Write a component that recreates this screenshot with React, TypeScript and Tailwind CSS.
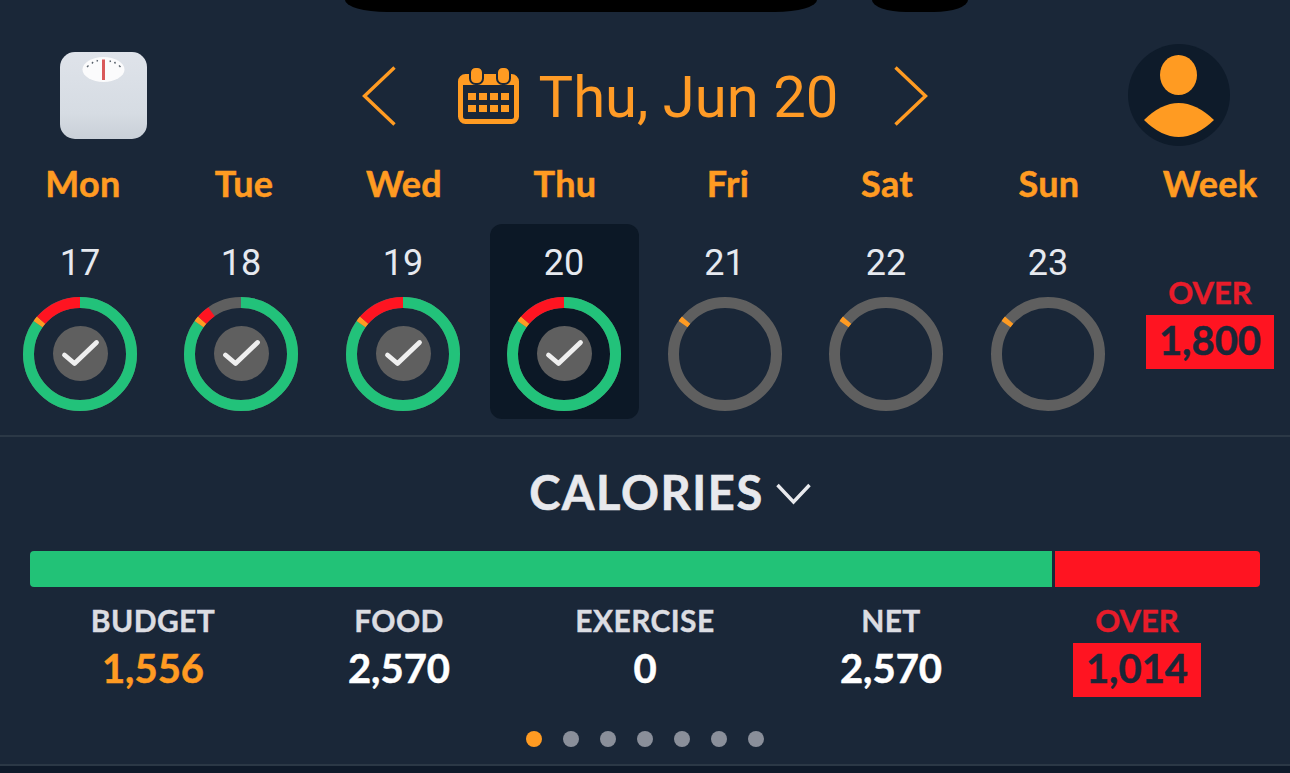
const ORANGE = '#ff9b22';
const GREEN = '#22c27a';
const RED = '#ff1421';
const GRAY = '#5f5f5f';

type Seg = [number, number, string];

function Ring({ segs, check }: { segs: Seg[]; check: boolean }) {
  return (
    <div className="relative w-[114px] h-[114px]">
      <svg width="114" height="114" viewBox="0 0 114 114" className="block -rotate-90">
        <circle cx="57" cy="57" r="51.5" fill="none" stroke={GRAY} strokeWidth="11" />
        {segs.map(([from, to, color], i) => (
          <circle
            key={i}
            cx="57"
            cy="57"
            r="51.5"
            fill="none"
            stroke={color}
            strokeWidth="11"
            pathLength={360}
            strokeDasharray={`${to - from} 360`}
            strokeDashoffset={-from}
          />
        ))}
      </svg>
      {check && (
        <div className="absolute left-[30px] top-[29px] w-[55px] h-[55px] rounded-full bg-[#5f5f5f] flex items-center justify-center">
          <svg width="55" height="55" viewBox="-27.5 -27.5 55 55">
            <path d="M-16 1.5L-6 10L16 -11" fill="none" stroke="#efefef" strokeWidth="4.8" strokeLinecap="round" strokeLinejoin="round" />
          </svg>
        </div>
      )}
    </div>
  );
}

const full: Seg[] = [[0, 305.5, GREEN], [305.5, 311, ORANGE], [311, 360, RED]];
const part: Seg[] = [[0, 305.5, GREEN], [305.5, 311, ORANGE], [311, 325, RED]];
const empty: Seg[] = [[305.5, 311, ORANGE]];

const days: { d: string; label: string; segs: Seg[]; check: boolean; sel?: boolean }[] = [
  { d: 'Mon', label: '17', segs: full, check: true },
  { d: 'Tue', label: '18', segs: part, check: true },
  { d: 'Wed', label: '19', segs: full, check: true },
  { d: 'Thu', label: '20', segs: full, check: true, sel: true },
  { d: 'Fri', label: '21', segs: empty, check: false },
  { d: 'Sat', label: '22', segs: empty, check: false },
  { d: 'Sun', label: '23', segs: empty, check: false },
];

function ScaleIcon() {
  return (
    <svg width="87" height="87" viewBox="0 0 87 87" className="block">
      <defs>
        <linearGradient id="scaleBg" x1="0" y1="0" x2="0" y2="1">
          <stop offset="0" stopColor="#dfe3ea" />
          <stop offset="0.7" stopColor="#d6dce3" />
          <stop offset="1" stopColor="#c9d0d8" />
        </linearGradient>
      </defs>
      <rect x="0" y="0" width="87" height="87" rx="15" fill="url(#scaleBg)" />
      <ellipse cx="43.5" cy="17.5" rx="21" ry="12.5" fill="#fbfbfc" />
      <path d="M27 15L28.5 13.5M32 11.5L33 10M37 9.5L37.5 8M50 8.5L50.5 10M54.5 10L55.5 11.5M59 13.5L60.5 15" stroke="#59626c" strokeWidth="1.4" fill="none" />
      <rect x="42" y="7.5" width="3" height="20.5" fill="#d9595a" />
    </svg>
  );
}

function CalendarIcon() {
  return (
    <svg width="61" height="56" viewBox="0 0 61 56" className="block">
      <rect x="2.5" y="8.5" width="56" height="45" rx="5" fill="none" stroke={ORANGE} strokeWidth="5" />
      <path d="M1 13a6 6 0 0 1 6-6h47a6 6 0 0 1 6 6v4H1z" fill={ORANGE} />
      <rect x="12" y="-1" width="13" height="17" rx="5.5" fill={ORANGE} stroke="#1a2738" strokeWidth="2" />
      <rect x="39" y="-1" width="13" height="17" rx="5.5" fill={ORANGE} stroke="#1a2738" strokeWidth="2" />
      {[10, 21, 32, 43].map((x) => (
        <g key={x}>
          <rect x={x} y="25" width="8" height="7" fill={ORANGE} />
          <rect x={x} y="37" width="8" height="7" fill={ORANGE} />
        </g>
      ))}
    </svg>
  );
}

function Avatar() {
  return (
    <div className="w-[102px] h-[102px] rounded-full bg-[#0e1b2a]">
      <svg width="102" height="102" viewBox="0 0 102 102" className="block">
        <ellipse cx="50.5" cy="31" rx="18.5" ry="20" fill={ORANGE} />
        <path d="M16 76Q50.5 42 86 76Q50.5 110 16 76Z" fill={ORANGE} />
      </svg>
    </div>
  );
}

function Chevron({ dir }: { dir: 'l' | 'r' }) {
  return (
    <svg width="34" height="60" viewBox="0 0 34 60" className="block">
      <path d={dir === 'l' ? 'M32.5 1.5L2.5 30L32.5 58.5' : 'M1.5 1.5L31.5 30L1.5 58.5'} fill="none" stroke={ORANGE} strokeWidth="3.4" />
    </svg>
  );
}

function Stat({ label, value, color }: { label: string; value: string; color: string }) {
  return (
    <div className="flex flex-col items-center">
      <div className="text-[30px] leading-[32px] tracking-[0.4px] font-bold [-webkit-text-stroke:0.4px_currentColor] text-[#dcdde2]">{label}</div>
      <div className={`h-[54px] mt-[7px] pb-[4px] flex items-center text-[40px] font-bold [-webkit-text-stroke:0.5px_currentColor] ${color}`}>{value}</div>
    </div>
  );
}

export default function App() {
  return (
    <div className="w-[1290px] h-[773px] overflow-hidden bg-[#1a2738] font-['Lato',sans-serif] flex flex-col">
      <div className="h-[12px] flex">
        <div className="ml-[345px] w-[472px] h-[12px] bg-black rounded-b-[42px_12px]" />
        <div className="ml-[55px] w-[96px] h-[12px] bg-black rounded-b-[34px_12px]" />
      </div>

      <div className="mt-[32px] h-[102px] px-[60px] grid grid-cols-[1fr_auto_1fr] items-center">
        <div className="justify-self-start"><ScaleIcon /></div>
        <div className="flex items-center mt-[2px]">
          <Chevron dir="l" />
          <div className="ml-[62px]"><CalendarIcon /></div>
          <div className="ml-[20px] mt-[2px] font-['Roboto',sans-serif] text-[58px] leading-[60px] text-[#ff9b26]">Thu, Jun 20</div>
          <div className="ml-[56px]"><Chevron dir="r" /></div>
        </div>
        <div className="justify-self-end"><Avatar /></div>
      </div>

      <div className="mt-[17px] grid grid-cols-[166px_156px_164px_158px_168px_150px_174px_148px] text-[36px] leading-[40px] tracking-[0.3px] font-bold [-webkit-text-stroke:0.5px_currentColor] text-[#ff9b22] text-center">
        {days.map((d) => (
          <div key={d.d}>{d.d}</div>
        ))}
        <div>Week</div>
      </div>

      <div className="mt-[21px] grid grid-cols-[160px_162px_162px_160px_161px_162px_162px_161px]">
        {days.map((d) => (
          <div key={d.label} className="flex justify-center">
            <div className={`w-[149px] h-[195px] pt-[19px] rounded-[12px] flex flex-col items-center ${d.sel ? 'bg-[#0c1826]' : ''}`}>
              <div className="font-['Roboto',sans-serif] text-[36px] leading-[40px] text-[#e6e9ef]">{d.label}</div>
              <div className="mt-[14px]"><Ring segs={d.segs} check={d.check} /></div>
            </div>
          </div>
        ))}
        <div className="flex flex-col items-center pt-[51px] pl-[1px]">
          <div className="text-[31px] leading-[34px] font-bold [-webkit-text-stroke:0.4px_currentColor] text-[#e81c2a]">OVER</div>
          <div className="mt-[6px] pb-[4px] w-[128px] h-[54px] bg-[#ff1421] flex items-center justify-center text-[40px] font-bold [-webkit-text-stroke:0.5px_currentColor] text-[#1a2738]">1,800</div>
        </div>
      </div>

      <div className="mt-[16px] h-[2px] bg-[#2b3846]" />

      <div className="mt-[27px] h-[56px] pl-[50px] flex items-center justify-center">
        <div className="text-[47px] leading-[56px] tracking-[1.6px] font-bold [-webkit-text-stroke:0.6px_currentColor] text-[#e8e9ed]">CALORIES</div>
        <svg width="35" height="22" viewBox="0 0 35 22" className="ml-[12px] mt-[4px] block">
          <path d="M1.5 2L17.5 19L33.5 2" fill="none" stroke="#e8e9ed" strokeWidth="3.4" />
        </svg>
      </div>

      <div className="mt-[31px] mx-[30px] h-[36px] flex gap-[3px]">
        <div className="w-[1022px] bg-[#22c277] rounded-l-[4px]" />
        <div className="flex-1 bg-[#ff1421] rounded-r-[4px]" />
      </div>

      <div className="mt-[17px] mx-[30px] grid grid-cols-5">
        <Stat label="BUDGET" value="1,556" color="text-[#ff9b22]" />
        <Stat label="FOOD" value="2,570" color="text-white" />
        <Stat label="EXERCISE" value="0" color="text-white" />
        <Stat label="NET" value="2,570" color="text-white" />
        <div className="flex flex-col items-center">
          <div className="text-[31px] leading-[32px] font-bold [-webkit-text-stroke:0.4px_currentColor] text-[#e81c2a]">OVER</div>
          <div className="mt-[7px] pb-[4px] w-[128px] h-[54px] bg-[#ff1421] flex items-center justify-center text-[40px] font-bold [-webkit-text-stroke:0.5px_currentColor] text-[#1a2738]">1,014</div>
        </div>
      </div>

      <div className="mt-[34px] flex justify-center gap-[21px]">
        <div className="w-[16px] h-[16px] rounded-full bg-[#ff9b22]" />
        {[0, 1, 2, 3, 4, 5].map((i) => (
          <div key={i} className="w-[16px] h-[16px] rounded-full bg-[#8a8f9a]" />
        ))}
      </div>

      <div className="mt-[17px] h-[2px] bg-[#2b3846]" />
      <div className="flex-1 bg-[#0e1a2a]" />
    </div>
  );
}
